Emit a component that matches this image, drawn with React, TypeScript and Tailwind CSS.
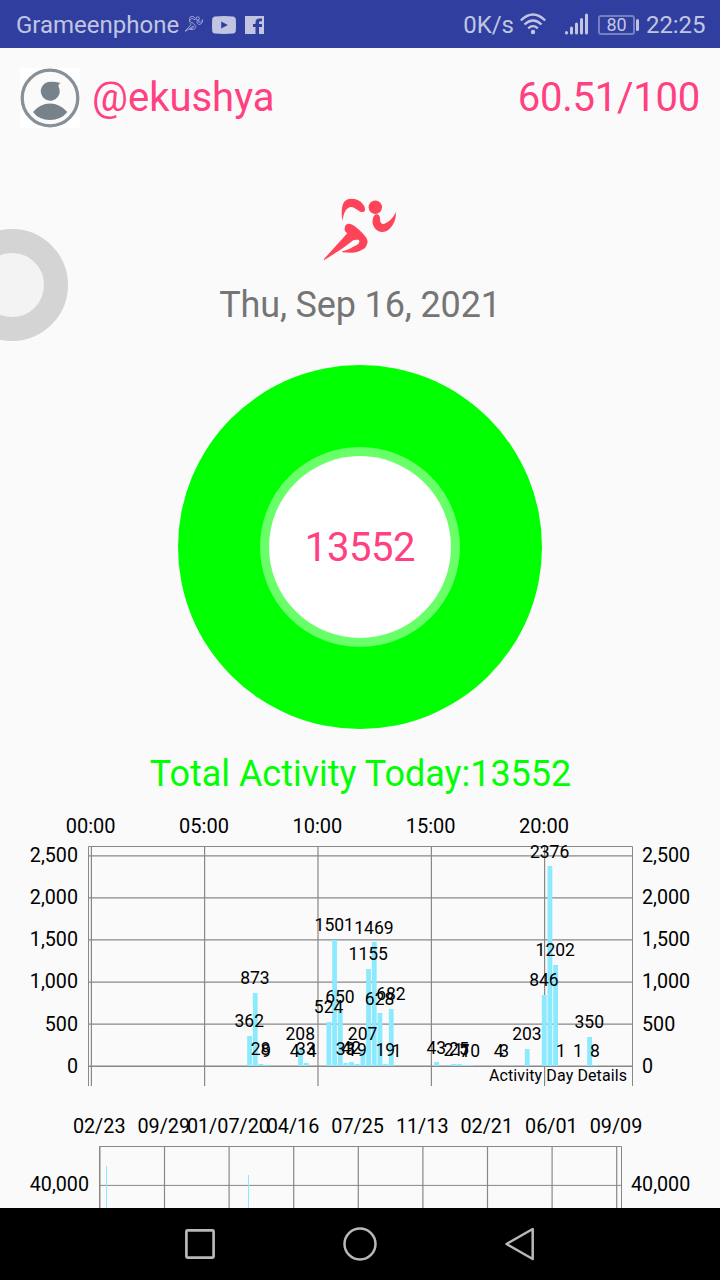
function Runner({ className, outline = false }: { className: string; outline?: boolean }) {
  return (
    <svg
      viewBox="0 0 74 64"
      className={className}
      fill={outline ? "none" : "currentColor"}
      stroke={outline ? "currentColor" : "none"}
      strokeWidth={outline ? 3 : 0}
    >
      <path d="M19.500 23C18 16 18.500 8 21 4C24 -.5 33 -.5 38 4C42 8 43.500 12 40.500 14C36 15 32 8 27 9C22 11 20.500 16 19.500 23Z" />
      <circle cx="52.300" cy="9.300" r="6.700" />
      <path d="M53 16.300C56 16 57 18.500 57 20.500C57 24 58 26 61 26C66 24 71 19 72.700 14C74 23 67 34 59.700 34C52 34 48.500 26 49.700 22C50 19 51 17 53 16.300Z" />
      <path d="M25.300 25.700C29 25 36 31 40.300 36C44 40 45.500 43 44 46C43 49 42 50.500 40.300 51C36 53.500 33 54.700 28.700 54.700L19.300 54.300V53.300C23 52 27 51 30.300 48.700C33 47.500 36 46 36.300 44C36.500 42 35.500 41.700 34.300 41.700C32.500 41.500 31.500 41.700 30.300 42.300L19.700 50.300L1 62.300V61L24.300 35.300C22 33.500 21.300 32 21.700 30.300C21.700 28 23 26 25.300 25.700Z" />
    </svg>
  );
}

const BARS: [number, number][] = [
  [28, 362], [29, 873], [30, 28], [31, 9], [36, 4], [37, 208], [38, 33], [39, 4],
  [42, 524], [43, 1501], [44, 650], [45, 33], [46, 42], [47, 19], [48, 207],
  [49, 1155], [50, 1469], [51, 628], [52, 19], [53, 682], [54, 1], [61, 43],
  [64, 21], [65, 25], [66, 7], [67, 10], [72, 4], [73, 3], [77, 203], [80, 846],
  [81, 2376], [82, 1202], [83, 1], [86, 1], [88, 350], [89, 8],
];

const BASE = 256;
const barX = (i: number) => 90.9 + i * 5.667;
const barH = (v: number) => v * 0.0841;

function DayChart() {
  return (
    <svg width="720" height="290" viewBox="0 0 720 290" className="block shrink-0" fontSize="20">
      {["00:00", "05:00", "10:00", "15:00", "20:00"].map((t, i) => (
        <text key={t} x={90.700 + i * 113.330} y="23" textAnchor="middle">{t}</text>
      ))}
      {["2,500", "2,000", "1,500", "1,000", "500", "0"].map((t, i) => (
        <g key={t}>
          <text x="78" y={52.300 + i * 42.050} textAnchor="end" fontSize="19.700">{t}</text>
          <text x="642" y={52.300 + i * 42.050} fontSize="19.700">{t}</text>
          <path d={`M88.500 ${45.800 + i * 42.080}H632.500`} stroke="#888" strokeWidth="1.250" />
        </g>
      ))}
      <g stroke="#888" fill="none">
        <path d="M88.500 276V36.500H632.500V276" />
        {[91.400, 204.600, 318, 431.400, 544.600].map((x) => (
          <path key={x} d={`M${x} 37V276`} strokeWidth="1.200" />
        ))}
      </g>
      {BARS.map(([i, v]) => {
        const top = Math.round(BASE - barH(v));
        return <rect key={i} x={barX(i) - 2.400} y={top} width="4.800" height={BASE - top} fill="#8ceaff" />;
      })}
      <path d="M88.500 256.500H632.500" stroke="#888" />
      <g fontSize="17.500" textAnchor="middle">
        {BARS.map(([i, v]) => (
          <text key={i} x={barX(i) - 0.300} y={BASE - 8.500 - barH(v)}>{v}</text>
        ))}
      </g>
      <text x="627" y="271" fontSize="16" textAnchor="end" textLength="138">Activity Day Details</text>
    </svg>
  );
}

function HistoryChart() {
  const dates = ["02/23", "09/29", "01/07/20", "04/16", "07/25", "11/13", "02/21", "06/01", "09/09"];
  return (
    <svg width="720" height="108" viewBox="0 0 720 108" className="block shrink-0" fontSize="20">
      {dates.map((t, i) => (
        <g key={t}>
          <text x={99.200 + i * 64.600} y="33" textAnchor="middle" fontSize="19.800">{t}</text>
          <path d={`M${99.900 + i * 64.600} 46V108`} stroke="#888" strokeWidth="1.200" />
        </g>
      ))}
      <path d="M99.500 108V46.500H621.500V108M99 85.400H622" stroke="#888" fill="none" />
      <text x="89" y="91" textAnchor="end" fontSize="19.700">40,000</text>
      <text x="631" y="91" fontSize="19.700">40,000</text>
      <path d="M106.500 66V108M248.500 75V108" stroke="#8ceaff" />
    </svg>
  );
}

function StatusBar() {
  return (
    <header className="flex h-12 shrink-0 items-center bg-[#303f9f] pl-4 pr-4 text-2xl leading-none text-[#c1c5e2]">
      <span className="w-[163px] whitespace-nowrap pt-0.5">Grameenphone</span>
      <Runner outline className="ml-[6px] h-4 w-[18px]" />
      <svg viewBox="0 0 24 18" className="ml-[9px] mt-0.5 h-[18px] w-6">
        <path fillRule="evenodd" fill="currentColor" d="M3 .4Q12-.3 21 .4Q23.600.6 23.800 3.500Q24.200 9 23.800 14.500Q23.600 17.400 21 17.600Q12 18.300 3 17.600Q.4 17.400.2 14.500Q-.2 9 .2 3.500Q.4.6 3 .4ZM9.200 5.500V12.500L15.800 9Z" />
      </svg>
      <svg viewBox="0 0 19 18" className="ml-[9px] mt-0.5 h-[18px] w-[19px]">
        <path fill="currentColor" d="M0 0H19V18H14V11H17V8H14V6.500Q14 5.300 15.500 5.300H17V2.500H14.500Q10.500 2.500 10.500 6.300V8H8V11H10.500V18H0Z" />
      </svg>
      <span className="ml-auto pt-0.5">0K/s</span>
      <svg viewBox="0 0 26 22" className="ml-[6px] h-[22px] w-[26px]" fill="none" stroke="currentColor" strokeWidth="2.300">
        <path d="M.8 7.500Q13-4.500 25.200 7.500M4.500 11.500Q13 3.500 21.500 11.500M8.200 15.300Q13 11 17.800 15.300" />
        <circle cx="13" cy="19" r="2.200" fill="currentColor" stroke="none" />
      </svg>
      <svg viewBox="0 0 24 22" className="ml-[19px] h-[22px] w-6" stroke="currentColor" strokeWidth="3" strokeLinecap="round">
        <path d="M1.500 19.500V20M6.500 15V20M11.500 11V20M16.500 6.500V20M21.500 2V20" />
      </svg>
      <span className="ml-[9px] mt-0.5 flex h-5 w-[37px] items-center justify-center rounded-[3px] border-2 border-[#7580bf] text-[18px]">80</span>
      <span className="ml-px mt-0.5 h-3 w-[3px] rounded-sm bg-[#c1c5e2]" />
      <span className="ml-[7px] w-[58px] whitespace-nowrap pt-0.5 tracking-[-0.1px]">22:25</span>
    </header>
  );
}

export default function App() {
  return (
    <div className="relative flex h-[1280px] w-[720px] flex-col overflow-hidden bg-[#fafafa] font-['Roboto',sans-serif]">
      <StatusBar />
      <main className="flex min-h-0 flex-1 flex-col overflow-hidden">
        <div className="flex h-[100px] shrink-0 items-center px-5 text-[40px] leading-none text-[#ff4081]">
          <svg viewBox="0 0 60 60" className="h-[60px] w-[60px]">
            <path fill="#fff" d="M0 0H60V60H0Z" />
            <circle cx="30" cy="30" r="27.800" fill="#fafafa" stroke="#879097" strokeWidth="3.300" />
            <path fill="#78828a" d="M40.500 15Q37 16.500 39.500 21A9.500 9.500 0 1 1 28 13.900Q34 13.200 40.500 15ZM13 44Q20 35.500 30 35.500Q40 35.500 47.300 44Q41 52 30 52Q19 52 13 44Z" />
          </svg>
          <span className="ml-3">@ekushya</span>
          <span className="ml-auto tracking-[-0.25px]">60.51/100</span>
        </div>
        <div className="flex shrink-0 flex-col items-center pt-[50px]">
          <Runner className="h-16 w-[74px] text-[#ff4359]" />
          <div className="mt-5 h-[46px] text-[36px] leading-[46px] tracking-[-0.15px] text-[#757575]">Thu, Sep 16, 2021</div>
          <div className="mt-[37px] flex h-[364px] w-[364px] items-center justify-center rounded-full bg-[#00ff00]">
            <div className="flex h-[200px] w-[200px] items-center justify-center rounded-full border-[9px] border-[#69ff69] bg-white pt-0.5 text-[40px] tracking-[-0.4px] text-[#ff4081]">
              13552
            </div>
          </div>
          <div className="mt-[22px] h-[46px] pl-px text-[36px] leading-[46px] tracking-[-0.03px] text-[#00ff00]">Total Activity Today:13552</div>
        </div>
        <div className="flex shrink-0 flex-col pt-[13px]">
          <DayChart />
          <HistoryChart />
        </div>
      </main>
      <nav className="flex h-[72px] shrink-0 items-center justify-center gap-[126px] bg-black text-[#b8b8b8]">
        <svg viewBox="0 0 34 34" className="size-[34px]" fill="none" stroke="currentColor" strokeWidth="2.700">
          <rect x="3.400" y="3.400" width="27.200" height="27.200" rx="1" />
        </svg>
        <svg viewBox="0 0 34 34" className="size-[34px]" fill="none" stroke="currentColor" strokeWidth="2.500">
          <circle cx="17" cy="17" r="15.500" />
        </svg>
        <svg viewBox="0 0 34 34" className="size-[34px]" fill="none" stroke="currentColor" strokeWidth="2.500" strokeLinejoin="round">
          <path d="M3.500 17L29.700 2V32Z" />
        </svg>
      </nav>
      <div className="absolute -left-11 top-[229px] h-28 w-28 rounded-full border-24 border-[#d4d4d4] bg-[#f3f3f3]" />
    </div>
  );
}
